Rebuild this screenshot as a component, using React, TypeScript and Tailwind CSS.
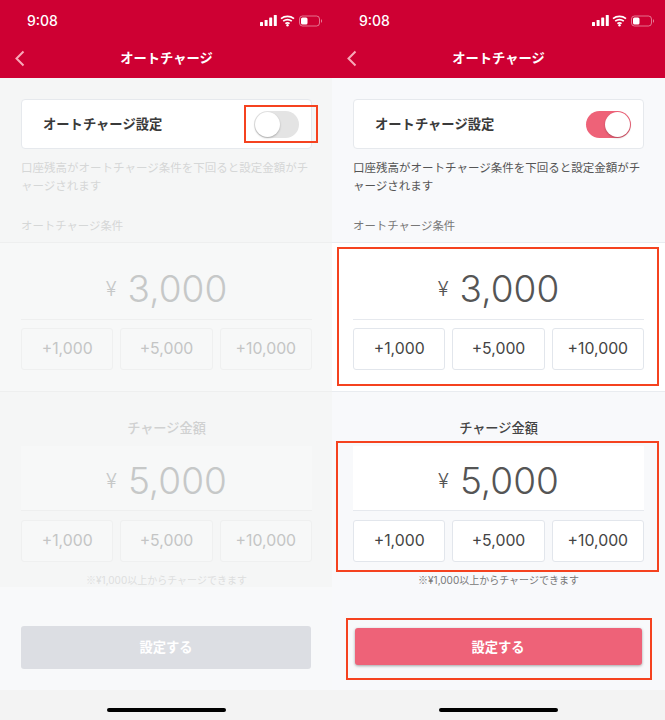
import React from "react";

const font = "font-['Inter','Noto_Sans_CJK_JP',sans-serif]";

function StatusIcons() {
  return (
    <svg width="62" height="14" viewBox="0 0 62 14" fill="white">
      <rect x="0" y="8" width="3" height="4" rx="0.6" />
      <rect x="4.6" y="6" width="3" height="6" rx="0.6" />
      <rect x="9.2" y="3.5" width="3" height="8.5" rx="0.6" />
      <rect x="13.8" y="1" width="3" height="11" rx="0.6" />
      <path
        d="M21 4.6a10.4 10.4 0 0 1 13 0M23.2 7.2a7 7 0 0 1 8.6 0M25.4 9.6a3.6 3.6 0 0 1 4.2 0"
        fill="none"
        stroke="white"
        strokeWidth="1.7"
      />
      <circle cx="27.5" cy="11.3" r="1.2" />
      <rect x="39.5" y="2" width="20" height="10" rx="3" fill="none" stroke="white" strokeOpacity="0.45" />
      <rect x="41" y="3.5" width="6.5" height="7" rx="1.5" />
      <path d="M61 5.2c.8.3 1 1 1 1.8s-.2 1.5-1 1.8z" fillOpacity="0.5" />
    </svg>
  );
}

function AmountPanel({ amount, off, plain }: { amount: string; off: boolean; plain?: boolean }) {
  const surface = plain
    ? off
      ? "mx-[21px] bg-[#f7f8f8] h-[64px] pt-[4px]"
      : "mx-[21px] bg-white h-[64px] pt-[4px]"
    : "h-[76px] pt-[14px]";
  const ink = off ? "text-[#c6c8c8]" : "text-[#555555]";
  return (
    <>
      <div className={`flex items-center justify-center ${surface}`}>
        <span className={`mr-[11px] mt-[2px] text-[20px] font-light ${ink}`}>¥</span>
        <span className={`text-[37px] font-light leading-none ${ink}`}>{amount}</span>
      </div>
      <div className={`mx-[21px] h-px ${off ? "bg-[#eeefef]" : "bg-[#e6e9ee]"}`} />
      <div className={`mx-[21px] grid grid-cols-3 gap-[7px] ${plain ? "mt-[9px]" : "mt-[8px]"}`}>
        {["+1,000", "+5,000", "+10,000"].map((label) => (
          <div
            key={label}
            className={`flex h-[42px] items-center justify-center rounded-[3px] border text-[15.8px] ${
              off
                ? "border-[#eff0f0] bg-[#f7f8f8] text-[#c4c5c5]"
                : "border-[#e2e6ec] bg-white text-[#444444]"
            }`}
          >
            {label}
          </div>
        ))}
      </div>
    </>
  );
}

function Phone({ off }: { off: boolean }) {
  const mark = "pointer-events-none absolute border-2 border-[#f5421f]";
  return (
    <div className={`relative flex h-[720px] w-[333px] shrink-0 flex-col ${font} ${off ? "bg-[#f8f9fa]" : "bg-[#f8f9fb]"}`}>
      <header className="relative h-[78px] shrink-0 bg-[#ce0033] text-white">
        <div className="flex items-center justify-between pl-[27px] pr-[11px] pt-[12px]">
          <span className="text-[14px] font-medium leading-[17px]">9:08</span>
          <StatusIcons />
        </div>
        <div className="mt-[15px] flex h-[30px] items-center justify-center text-[13.3px] font-bold">オートチャージ</div>
        <svg className="absolute left-[14px] top-[50px]" width="11" height="17" viewBox="0 0 11 17" fill="none">
          <path d="M9.5 1.5 2.5 8.5l7 7" stroke="#f8a8b8" strokeWidth="2" />
        </svg>
      </header>

      <main className={`h-[509px] shrink-0 pt-[21px] ${off ? "bg-[#f5f6f6]" : ""}`}>
        <div className="mx-[21px] flex h-[50px] items-center justify-between rounded-[4px] border border-[#e6e9ed] bg-white pl-[21px] pr-[12px]">
          <span className="mt-[1px] text-[13.3px] font-bold text-[#3a3a3a]">オートチャージ設定</span>
          <div className={`flex h-[27px] w-[45px] items-center rounded-full p-[1px] ${off ? "justify-start bg-[#e4e4e4]" : "justify-end bg-[#ee6278]"}`}>
            <div className="h-[25px] w-[25px] rounded-full bg-white shadow-[0_1px_2px_rgba(0,0,0,0.25)]" />
          </div>
        </div>

        <p className={`mx-[21px] mt-[10px] text-[11.5px] leading-[18px] ${off ? "text-[#d5d7d7]" : "text-[#555555]"}`}>
          口座残高がオートチャージ条件を下回ると設定金額がチャージされます
        </p>
        <p className={`mx-[21px] mt-[22px] text-[11.4px] leading-[18px] ${off ? "text-[#d5d7d7]" : "text-[#777777]"}`}>
          オートチャージ条件
        </p>

        <section className={`mt-[7px] h-[150px] border-y ${off ? "border-[#eeefef] bg-[#f7f8f8]" : "border-[#e9ecf0] bg-white"}`}>
          <AmountPanel amount="3,000" off={off} />
        </section>

        <h2 className={`mt-[26px] text-center text-[13.2px] font-medium leading-[20px] ${off ? "text-[#d0d1d1]" : "text-[#444444]"}`}>
          チャージ金額
        </h2>
        <section className="mt-[8px]">
          <AmountPanel amount="5,000" off={off} plain />
        </section>
        <p className={`mt-[10px] text-center text-[10px] leading-[16px] ${off ? "text-[#dddede]" : "text-[#777777]"}`}>
          <span className="font-['Noto_Sans_CJK_JP',sans-serif]">※</span>¥1,000以上からチャージできます
        </p>
      </main>

      <div className="flex h-[103px] shrink-0 items-start justify-center pr-px">
        {off ? (
          <button className="mt-[39px] flex h-[43px] w-[290px] items-center justify-center rounded-[3px] bg-[#dcdee3] pt-[1px] text-[13.3px] font-bold text-white">
            設定する
          </button>
        ) : (
          <button className="mt-[41px] flex h-[37px] w-[287px] items-center justify-center rounded-[3px] bg-[#ee6278] pt-[2px] text-[13.3px] font-bold text-white shadow-[0_1px_3px_rgba(0,0,0,0.35)]">
            設定する
          </button>
        )}
      </div>

      <footer className="flex h-[30px] shrink-0 items-end justify-center bg-[#f3f3f3] pb-[8px]">
        <div className="h-[4px] w-[119px] rounded-full bg-black" />
      </footer>

      {off ? (
        <div className={`${mark} left-[244px] top-[105px] h-[38px] w-[74px]`} />
      ) : (
        <>
          <div className={`${mark} left-[5px] top-[247px] h-[139px] w-[322px]`} />
          <div className={`${mark} left-[4px] top-[441px] h-[131px] w-[323px]`} />
          <div className={`${mark} left-[14px] top-[618px] h-[62px] w-[306px]`} />
        </>
      )}
    </div>
  );
}

export default function App() {
  return (
    <div className="flex h-[720px] w-[665px] overflow-hidden bg-white">
      <div className="w-[332px] shrink-0 overflow-hidden">
        <Phone off />
      </div>
      <Phone off={false} />
    </div>
  );
}
